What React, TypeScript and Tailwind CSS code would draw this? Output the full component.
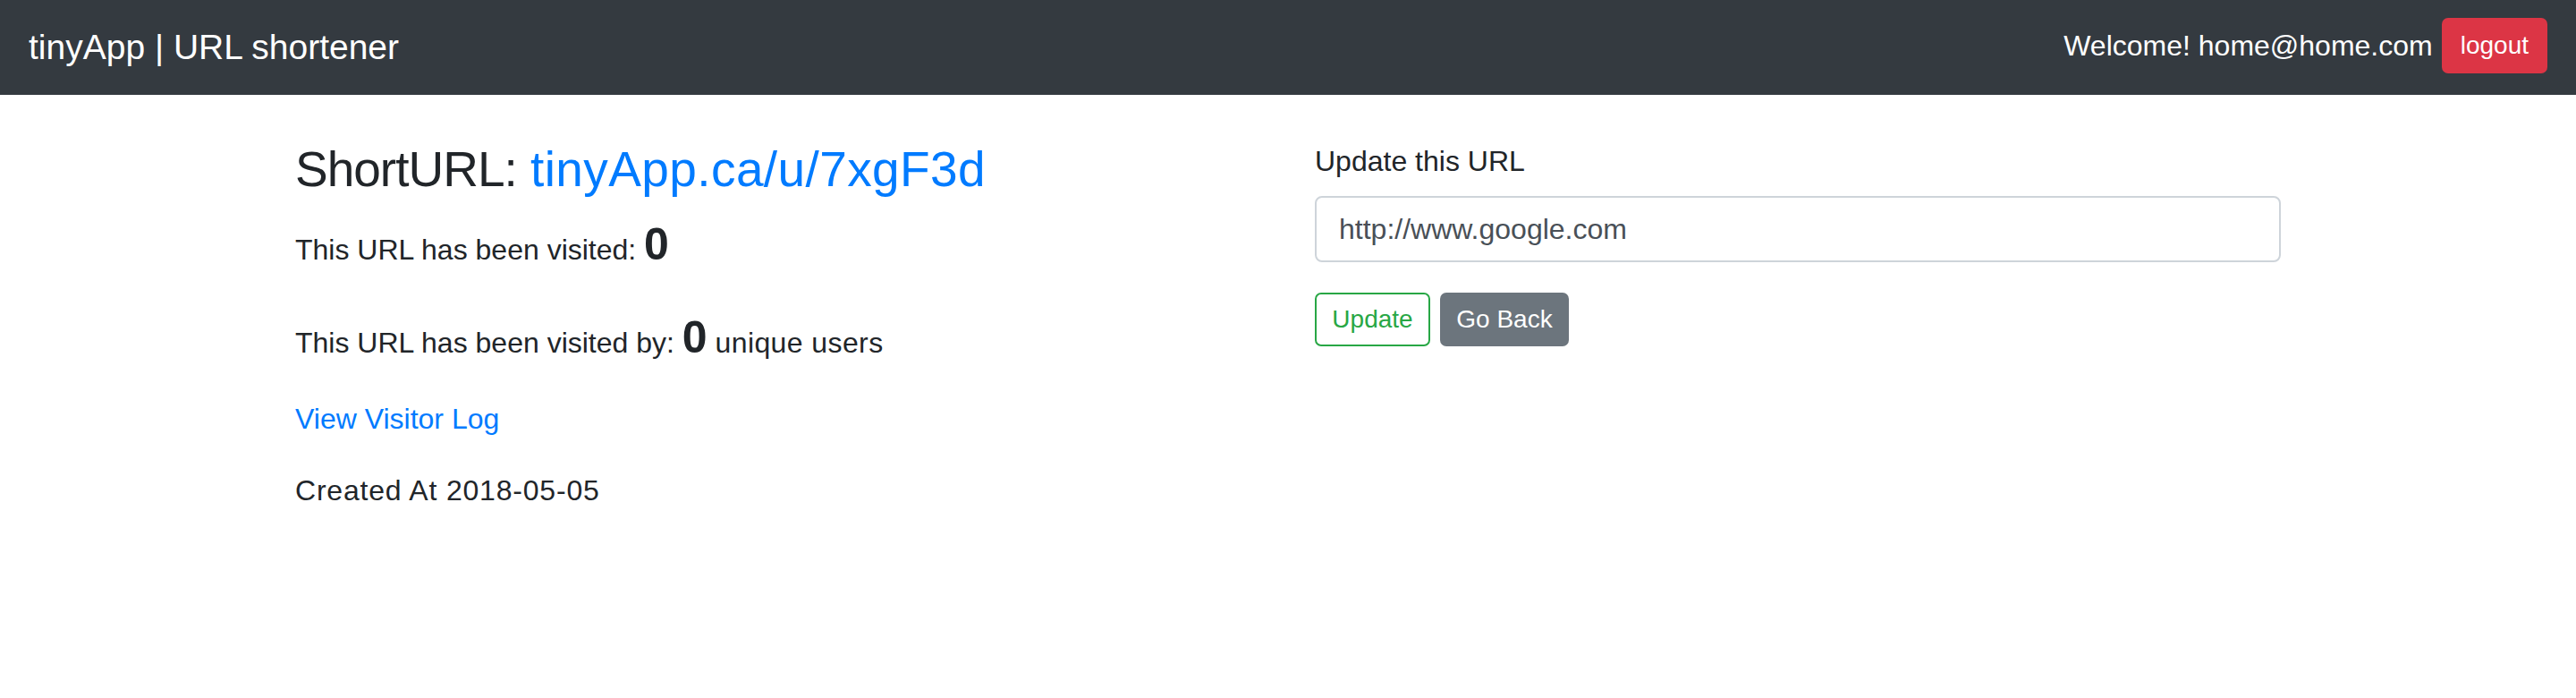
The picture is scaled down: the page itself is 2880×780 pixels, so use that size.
import React from "react";

const font = { fontFamily: '"Liberation Sans", Arial, sans-serif' };

function Navbar() {
  return (
    <nav className="flex h-[106px] items-center justify-between bg-[#343a40] px-[32px]">
      <span className="text-[39px] leading-[60px] text-white">tinyApp | URL shortener</span>
      <div className="mb-[4px] flex items-center gap-[10px]">
        <span className="text-[32px] leading-[48px] text-white">Welcome! home@home.com</span>
        <button className="h-[62px] rounded-[7px] bg-[#dc3545] px-[21px] text-[28px] leading-[42px] text-white">
          logout
        </button>
      </div>
    </nav>
  );
}

function Stats() {
  return (
    <div className="w-1/2 px-[30px] text-[32px] leading-[48px] text-[#212529]">
      <h3 className="text-[55px] leading-[67px]">
        <span className="tracking-[-1px]">ShortURL:</span>{" "}
        <a className="tracking-[0.4px] text-[#007bff]">tinyApp.ca/u/7xgF3d</a>
      </h3>
      <p className="mt-[32px]">
        This URL has been visited: <b className="text-[50px] leading-[0]">0</b>
      </p>
      <p className="mt-[56px]">
        This URL has been visited by: <b className="text-[50px] leading-[0]">0</b>{" "}
        <span className="tracking-[0.4px]">unique users</span>
      </p>
      <p className="mt-[37px]">
        <a className="text-[#007bff]">View Visitor Log</a>
      </p>
      <p className="mt-[32px] tracking-[0.8px]">Created At 2018-05-05</p>
    </div>
  );
}

function UpdateForm() {
  return (
    <div className="w-1/2 px-[30px] text-[32px] leading-[48px] text-[#212529]">
      <label className="block">Update this URL</label>
      <div className="mt-[15px] flex h-[74px] items-center rounded-[8px] border-2 border-[#ced4da] px-[25px] text-[#495057]">
        http://www.google.com
      </div>
      <div className="mt-[34px] flex gap-[11px]">
        <button className="h-[60px] w-[129px] rounded-[7px] border-2 border-[#28a745] text-[28px] text-[#28a745]">
          Update
        </button>
        <button className="h-[60px] w-[144px] rounded-[7px] bg-[#6c757d] text-[28px] text-white">
          Go Back
        </button>
      </div>
    </div>
  );
}

export default function App(): React.JSX.Element {
  return (
    <div className="min-h-[780px] bg-white" style={font}>
      <Navbar />
      <main className="mx-auto mt-[50px] flex w-[2280px]">
        <Stats />
        <UpdateForm />
      </main>
    </div>
  );
}
